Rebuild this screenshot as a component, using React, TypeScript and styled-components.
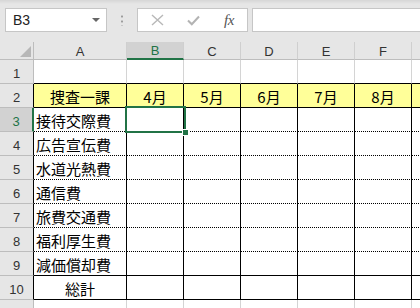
import React from 'react'
import styled, { createGlobalStyle } from 'styled-components'

const GREEN = '#217346'
const HEAD_BG = '#e6e6e6'
const HEAD_SEL = '#d2d2d2'
const HEAD_LINE = '#bdbdbd'
const GRID = '#d4d4d4'
const YELLOW = '#ffff99'
const SOLID = '1px solid #000'
const DOTTED = '1px dotted #000'

const GlobalStyle = createGlobalStyle`
  html, body {
    margin: 0;
    padding: 0;
    background: #fff;
  }
  body {
    overflow: hidden;
  }
`

const Window = styled.div`
  width: 420px;
  height: 308px;
  overflow: hidden;
  background: #fff;
  display: flex;
  flex-direction: column;
`

const FormulaBar = styled.div`
  flex: none;
  height: 42px;
  box-sizing: border-box;
  padding: 8px 0 0 5px;
  background: linear-gradient(#d6d6d6, ${HEAD_BG} 4px);
  display: flex;
  align-items: flex-start;
  overflow: hidden;
`

const NameBox = styled.div`
  flex: none;
  width: 102px;
  height: 24px;
  box-sizing: border-box;
  background: #fff;
  border: 1px solid #c6c6c6;
  display: flex;
  align-items: center;
  justify-content: space-between;
  padding: 0 6px 0 7px;
  font-family: 'Liberation Sans', Arial, sans-serif;
  font-size: 14px;
  color: #222;
`

const DropArrow = styled.span`
  width: 0;
  height: 0;
  border-left: 4px solid transparent;
  border-right: 4px solid transparent;
  border-top: 4px solid #666;
`

const Grip = styled.div`
  flex: none;
  width: 2px;
  height: 12px;
  margin: 6px 14px 0;
  background: radial-gradient(circle, #9c9c9c 1px, transparent 1.2px) 0 0 / 2px 5px repeat-y;
`

const ButtonBox = styled.div`
  flex: none;
  width: 111px;
  height: 24px;
  box-sizing: border-box;
  background: #fff;
  border: 1px solid #c6c6c6;
  display: flex;
  align-items: center;
  padding-left: 1px;
`

const BarButton = styled.span`
  flex: none;
  width: 36px;
  height: 22px;
  display: flex;
  align-items: center;
  justify-content: center;
`

const Fx = styled.span`
  font-family: 'Liberation Serif', 'Times New Roman', serif;
  font-style: italic;
  font-size: 15px;
  color: #555;
  letter-spacing: -0.5px;
`

const FormulaInput = styled.div`
  flex: none;
  width: 220px;
  height: 24px;
  margin-left: 4px;
  box-sizing: border-box;
  background: #fff;
  border: 1px solid #c6c6c6;
`

const Sheet = styled.div`
  display: grid;
  grid-template-columns: 34px 93px repeat(6, 57px);
  grid-template-rows: 18px repeat(11, 24px);
`

const Corner = styled.div`
  box-sizing: border-box;
  background: ${HEAD_BG};
  border-right: 1px solid ${HEAD_LINE};
  border-bottom: 1px solid ${HEAD_LINE};
  display: flex;
  align-items: flex-end;
  justify-content: flex-end;
  padding: 0 2px 2px 0;
`

const CornerMark = styled.span`
  width: 0;
  height: 0;
  border-left: 11px solid transparent;
  border-bottom: 11px solid #b7b7b7;
`

const ColHead = styled.div<{ $selected?: boolean }>`
  box-sizing: border-box;
  background: ${p => (p.$selected ? HEAD_SEL : HEAD_BG)};
  color: ${p => (p.$selected ? GREEN : '#333')};
  border-right: 1px solid #cfcfcf;
  border-bottom: ${p => (p.$selected ? `2px solid ${GREEN}` : `1px solid ${HEAD_LINE}`)};
  display: flex;
  align-items: center;
  justify-content: center;
  padding-top: 1px;
  font-family: 'Liberation Sans', Arial, sans-serif;
  font-size: 13px;
`

const RowHead = styled.div<{ $selected?: boolean; $edge?: string }>`
  box-sizing: border-box;
  background: ${p => (p.$selected ? HEAD_SEL : HEAD_BG)};
  color: ${p => (p.$selected ? GREEN : '#333')};
  border-right: ${p => (p.$selected ? `2px solid ${GREEN}` : `1px solid ${p.$edge ?? HEAD_LINE}`)};
  border-bottom: 1px solid ${HEAD_LINE};
  display: flex;
  align-items: flex-end;
  justify-content: center;
  padding-bottom: 2px;
  font-family: 'Liberation Sans', Arial, sans-serif;
  font-size: 13px;
  line-height: 15px;
`

const Cell = styled.div<{ $right?: string; $bottom?: string; $fill?: string; $center?: boolean; $selected?: boolean }>`
  box-sizing: border-box;
  position: ${p => (p.$selected ? 'relative' : 'static')};
  background: ${p => p.$fill ?? '#fff'};
  border-right: ${p => p.$right ?? `1px solid ${GRID}`};
  border-bottom: ${p => p.$bottom ?? `1px solid ${GRID}`};
  display: flex;
  align-items: flex-end;
  justify-content: ${p => (p.$center ? 'center' : 'flex-start')};
  padding: 0 2px 2px;
  font-family: 'Noto Sans CJK JP', 'Noto Sans', sans-serif;
  font-size: 15px;
  line-height: 17px;
  color: #000;
  white-space: nowrap;
`

const Selection = styled.div`
  position: absolute;
  top: -2px;
  left: -2px;
  right: -3px;
  bottom: -2px;
  border: 2px solid ${GREEN};
  z-index: 2;
  pointer-events: none;
`

const Handle = styled.span`
  position: absolute;
  right: -5px;
  bottom: -5px;
  width: 5px;
  height: 5px;
  background: ${GREEN};
  border: 1px solid #fff;
`

// column G only peeks in at the right edge, so its label stays blank
const columns = ['A', 'B', 'C', 'D', 'E', 'F', '']
const months = ['4月', '5月', '6月', '7月', '8月', '']
const items = ['接待交際費', '広告宣伝費', '水道光熱費', '通信費', '旅費交通費', '福利厚生費', '減価償却費']

type CellSpec = { text?: string; center?: boolean; fill?: string; right?: string; bottom?: string }

const buildRow = (row: number): CellSpec[] =>
  columns.map((_, c) => {
    if (row === 1) return { bottom: SOLID }
    if (row === 2) {
      return {
        text: c === 0 ? '捜査一課' : months[c - 1],
        center: true,
        fill: YELLOW,
        right: SOLID,
        bottom: SOLID,
      }
    }
    if (row >= 3 && row <= 9) {
      return {
        text: c === 0 ? items[row - 3] : undefined,
        right: SOLID,
        bottom: row === 9 ? SOLID : DOTTED,
      }
    }
    if (row === 10) {
      return { text: c === 0 ? '総計' : undefined, center: true, right: SOLID, bottom: SOLID }
    }
    return {}
  })

const XIcon = () => (
  <svg width="13" height="12" viewBox="0 0 13 12">
    <path d="M1 1 L12 11 M12 1 L1 11" stroke="#b8b8b8" strokeWidth="1.4" fill="none" />
  </svg>
)

const CheckIcon = () => (
  <svg width="13" height="11" viewBox="0 0 13 11">
    <path d="M1 5.5 L4.8 9.3 L12 1.5" stroke="#b3b3b3" strokeWidth="2" fill="none" />
  </svg>
)

export default function App() {
  const rows = Array.from({ length: 11 }, (_, i) => i + 1)
  return (
    <Window>
      <GlobalStyle />
      <FormulaBar>
        <NameBox>
          B3
          <DropArrow />
        </NameBox>
        <Grip />
        <ButtonBox>
          <BarButton>
            <XIcon />
          </BarButton>
          <BarButton>
            <CheckIcon />
          </BarButton>
          <BarButton>
            <Fx>fx</Fx>
          </BarButton>
        </ButtonBox>
        <FormulaInput />
      </FormulaBar>
      <Sheet>
        <Corner>
          <CornerMark />
        </Corner>
        {columns.map((col, i) => (
          <ColHead key={i} $selected={col === 'B'}>
            {col}
          </ColHead>
        ))}
        {rows.map(row => (
          <React.Fragment key={row}>
            <RowHead $selected={row === 3} $edge={row >= 2 && row <= 10 ? '#000' : undefined}>
              {row <= 10 ? row : ''}
            </RowHead>
            {buildRow(row).map((cell, c) => {
              const selected = row === 3 && c === 1
              return (
                <Cell
                  key={c}
                  $fill={cell.fill}
                  $right={cell.right}
                  $bottom={cell.bottom}
                  $center={cell.center}
                  $selected={selected}
                >
                  {cell.text}
                  {selected && (
                    <Selection>
                      <Handle />
                    </Selection>
                  )}
                </Cell>
              )
            })}
          </React.Fragment>
        ))}
      </Sheet>
    </Window>
  )
}
